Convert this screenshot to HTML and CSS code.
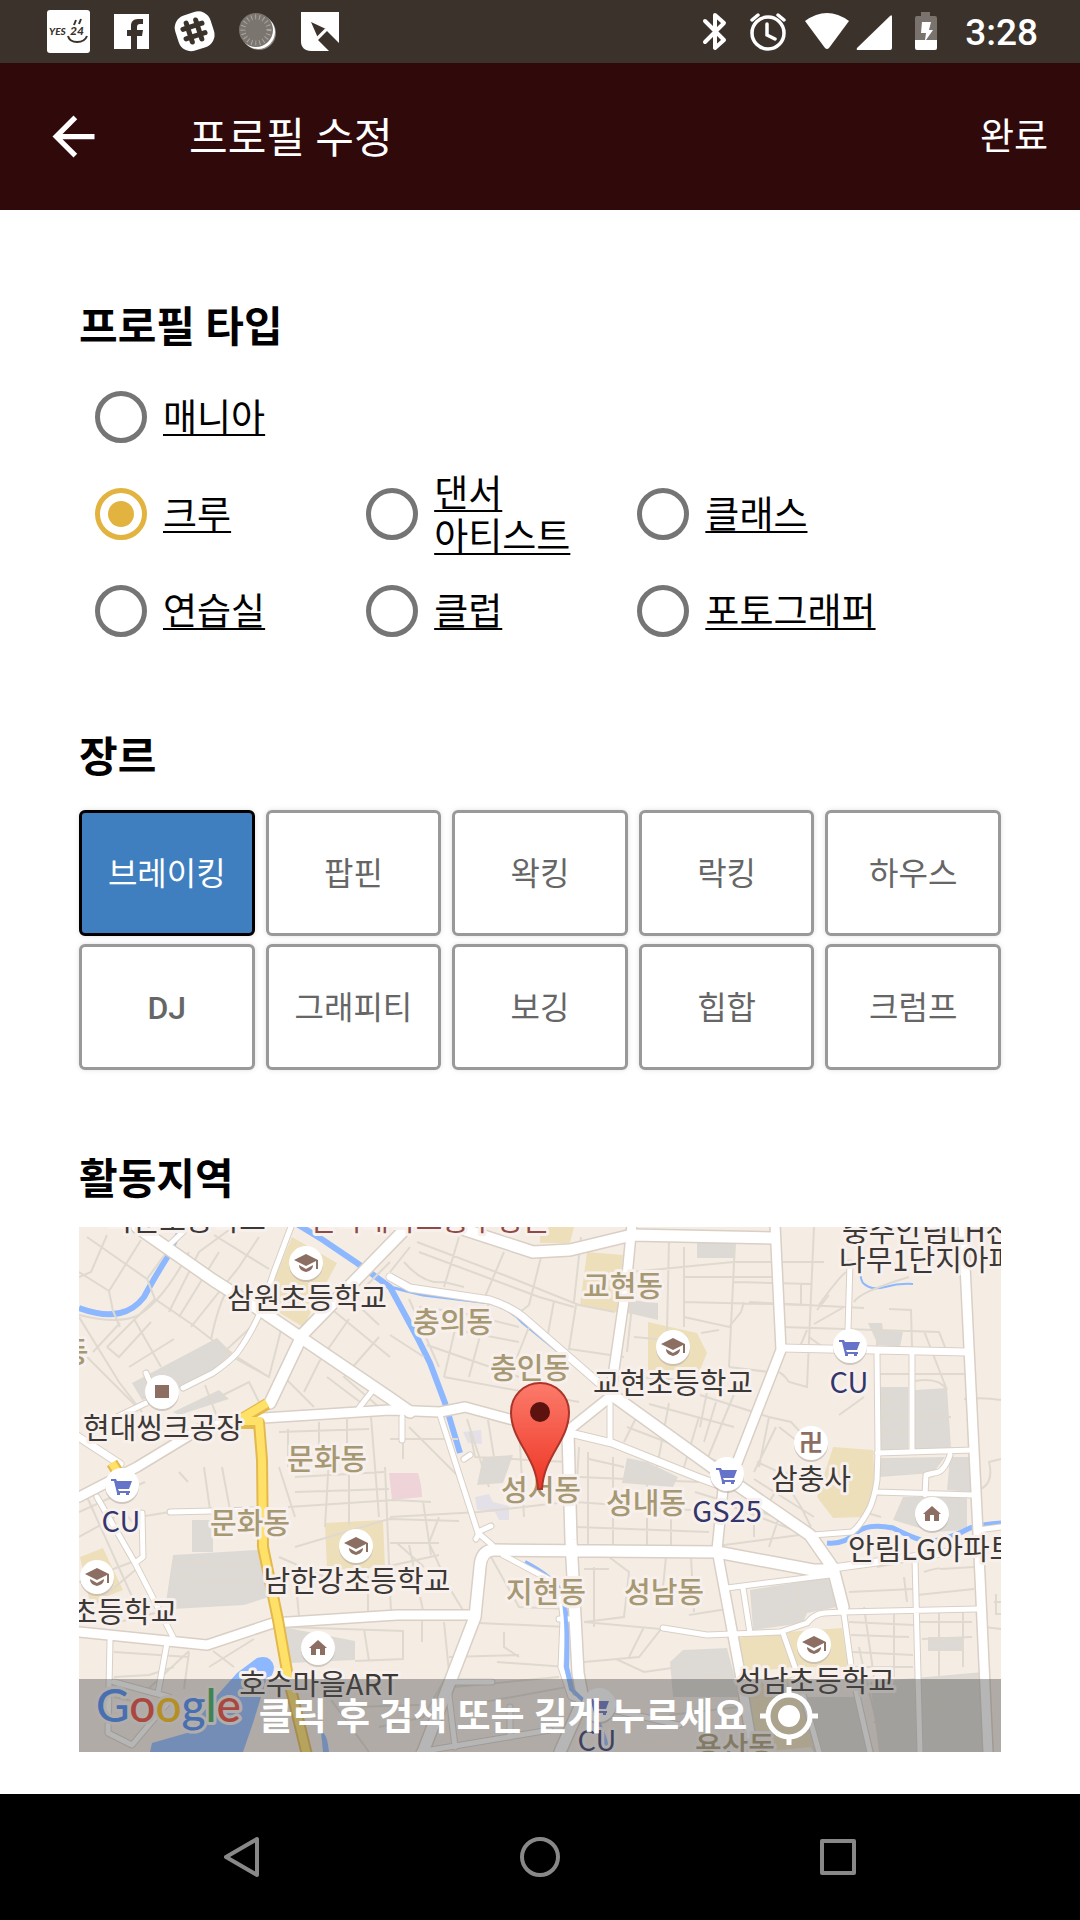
FILE: index.html
```html
<!DOCTYPE html>
<html lang="ko">
<head>
<meta charset="UTF-8">
<meta name="viewport" content="width=device-width, initial-scale=1.0">
<title>프로필 수정</title>
<link rel="stylesheet" href="styles.css">
</head>
<body>

<div class="status-bar">
<div class="notifications">
<svg viewBox="0 0 63 63"><rect x="10" y="10" width="43" height="43" rx="3" fill="#fff"/><g fill="#3b322c" font-family="Lato, sans-serif" font-weight="900" font-style="italic"><text x="12" y="35" font-size="10">YES</text><text x="33" y="35" font-size="12">24</text></g><path d="M39 20l-2 5M44 19l-2 5M31 36c2 8 16 8 19 0" fill="none" stroke="#3b322c" stroke-width="2"/></svg>
<svg viewBox="0 0 63 63"><path d="M14 14h35v35H37V36h5l1-6h-6v-3c0-2 1-3 3-3h3v-5h-5c-5 0-7 3-7 7v4h-4v6h4v13H14z" fill="#fff"/></svg>
<svg viewBox="0 0 63 63"><rect x="13" y="13" width="37" height="37" rx="13" fill="#fff" transform="rotate(-18 31 31)"/><g transform="rotate(-18 31 31)" stroke="#3b322c" stroke-width="5" stroke-linecap="round"><path d="M26 21v20M36 21v20M21 26h20M21 36h20"/></g></svg>
<svg viewBox="0 0 63 63"><circle cx="33" cy="33" r="17" fill="#8b8681"/><circle cx="32" cy="32" r="17" fill="#fff"/><circle cx="30" cy="30" r="17" fill="#7a756f"/><circle cx="30" cy="30" r="13" fill="none" stroke="#a9a5a0" stroke-width="5" stroke-dasharray="1 3"/></svg>
<svg viewBox="0 0 63 63"><path d="M12 12h38v31L38 31l-4 4-5 5 11 11H22c-6 0-10-4-10-9z" fill="#fff"/><path d="M22 22l15 7-8 9z" fill="#3b322c"/><path d="M37 29l-9 9" stroke="#fff" stroke-width="2"/></svg>
</div>
<div class="indicators">
<svg class="system-icons" viewBox="0 0 240 63">
<path d="M4 21l19 19-9 8V15l9 8L4 42" fill="none" stroke="#fff" stroke-width="4" stroke-linejoin="round" stroke-linecap="round"/>
<circle cx="67" cy="33" r="16" fill="none" stroke="#fff" stroke-width="3.5"/>
<path d="M66 24v11l8 4M51 20l6-5M83 20l-6-5" fill="none" stroke="#fff" stroke-width="3.5" stroke-linecap="round"/>
<path d="M104 21q22-16 44 0l-20 27q-2 2-4 0z" fill="#fff"/>
<path d="M156 48l33-32q2-2 2 1v31q0 2-2 2h-32q-2 0-1-2z" fill="#fff"/>
<path d="M220 12h9v4h5q2 0 2 2v22h-22V18q0-2 2-2h4z" fill="#7a736d"/>
<path d="M214 40h22v8q0 2-2 2h-18q-2 0-2-2z" fill="#fff"/>
<path d="M221 22h9l-2 8h4l-7 10h-1l1-7h-5z" fill="#fff"/>
</svg>
<span class="clock">3:28</span>
</div>
</div>

<header class="app-bar">
<button class="back" type="button" aria-label="뒤로"><svg viewBox="0 0 24 24"><path d="M20 11H7.830l5.590-5.590L12 4l-8 8 8 8 1.410-1.410L7.830 13H20z" fill="#fff"/></svg></button>
<h1>프로필 수정</h1>
<button class="done" type="button">완료</button>
</header>

<main class="content">
<section class="section">
<h2>프로필 타입</h2>
<div class="types">
<label class="type wide"><input type="radio" name="type"><span>매니아</span></label>
<label class="type"><input type="radio" name="type" checked><span>크루</span></label>
<label class="type"><input type="radio" name="type"><span>댄서<br>아티스트</span></label>
<label class="type"><input type="radio" name="type"><span>클래스</span></label>
<label class="type"><input type="radio" name="type"><span>연습실</span></label>
<label class="type"><input type="radio" name="type"><span>클럽</span></label>
<label class="type"><input type="radio" name="type"><span>포토그래퍼</span></label>
</div>
</section>

<section class="section">
<h2>장르</h2>
<div class="genres">
<button class="genre active" type="button">브레이킹</button>
<button class="genre" type="button">팝핀</button>
<button class="genre" type="button">왁킹</button>
<button class="genre" type="button">락킹</button>
<button class="genre" type="button">하우스</button>
<button class="genre latin" type="button">DJ</button>
<button class="genre" type="button">그래피티</button>
<button class="genre" type="button">보깅</button>
<button class="genre" type="button">힙합</button>
<button class="genre" type="button">크럼프</button>
</div>
</section>

<section class="section">
<h2>활동지역</h2>
<div class="map">
<svg class="map-view" viewBox="0 0 922 525" preserveAspectRatio="xMidYMid slice">
<defs>
<linearGradient id="pinFill" x1="0" y1="0" x2="0" y2="1"><stop offset="0" stop-color="#fc7b6b"/><stop offset="1" stop-color="#ee3524"/></linearGradient>
<symbol id="spot" viewBox="0 0 40 40"><circle cx="20" cy="22" r="17" fill="#b8afa8" opacity=".6"/><circle cx="20" cy="20" r="17" fill="#fff"/></symbol>
<symbol id="school" viewBox="0 0 40 40"><use href="#spot"/><path d="M8 17l12-6 12 6v9h-2v-8l-10 5z" fill="#8d6e63"/><path d="M13 22l7 4 7-4c0 4-3 6-7 7-4-1-7-3-7-7z" fill="#8d6e63"/></symbol>
<symbol id="cart" viewBox="0 0 40 40"><use href="#spot"/><path d="M9 14h5l1 2h15l-3 8H16l1 2h11v2H15l-3-12H9zM15 27h3v3h-3zM24 27h3v3h-3z" fill="#6573c8"/></symbol>
<symbol id="home" viewBox="0 0 40 40"><use href="#spot"/><path d="M20 12l9 8h-2v7h-5v-6h-4v6h-5v-7h-2z" fill="#8d6e63"/></symbol>
</defs>
<rect width="922" height="525" fill="#f5ede4"/>

<!-- blocks -->
<g fill="#dddad5">
<path d="M53 156L138 111 153 126 134 145 104 160 63 173zM94 185L140 163 150 172 100 188z"/>
<path d="M94 328L179 323 190 370 165 378 94 382 87 375zM113 293h21v32h-21z"/>
<path d="M404 230L434 228 424 256 398 258zM548 231L568 235 599 250 594 260 543 256zM551 73L579 76 579 93 549 86z"/>
<path d="M789 96h14l1 7 20 2-3 15-22-2zM801 160h28v63h-28zM836 163l32-2 4 60-36 2zM801 231l65-1-12 16-53 4zM871 230h22v35l-25-2z"/>
<path d="M824 270h64v33l-34 2-40-12zM671 363l80-13 7 30-30 6-4 10-50 7zM604 423l44-2 13 49h-67l-3-35zM791 455l113-10 4 80h-108zM204 400l72 14v19l-65 3zM618 16h38v15h-38zM849 410h35v14h-35zM700 470h80l15 55h-60z"/>
</g>
<g fill="#eedfbb">
<path d="M213 10L258 36 224 100 201 86 196 50zM508 25L544 28 538 85 501 78zM569 95L618 106 628 126 621 143 569 143zM461 0h34l-4 16h-30z"/>
<path d="M754 220L794 223 796 260 784 290 754 291 738 270zM246 296L304 293 306 340 248 343zM1 330L24 321 44 363 11 376z"/>
<path d="M658 411L701 406 714 440 664 446zM708 405L763 401 769 440 718 440zM664 450h50l20 70-58 5z"/>
</g>
<path d="M310 246h29q4 12 4 24l-30 3z" fill="#eed3d8"/>
<path d="M384 205l18-2 1 14-14-1zM396 270l14-3 4 8 16 4v14h-10l-4-8-18-2z" fill="#e3e0e8"/>

<!-- water -->
<path d="M178 431q14-4 17 9 0 9-8 14l-13 42-10 29H71l2-9 35-10 26-33 24-27z" fill="#8db8ff"/>
<path d="M242 505q6 0 8 20h-6z" fill="#8db8ff"/>
<g fill="none" stroke="#8db8ff" stroke-width="6">
<path d="M0 81Q25 90 41 86 55 83 65 70 74 53 89 29 95 12 105 0"/>
<path d="M218-3L244 13 278 36 311 60 338 110 351 136 366 176 381 226"/>
<path d="M748 316Q765 318 778 305 790 296 814 301 840 314 851 315 875 310 891 301 905 297 922 296" stroke-width="5"/>
<path d="M446 335Q475 350 483 366 490 385 488 440 492 462 507 476 525 500 529 525" stroke-width="4"/>
<path d="M311 60L344 68 411 76Q432 82 444 96L518 156" stroke-width="3"/>
<path d="M782 36q-2 14 2 20 8 8 22 4 14-4 28-3" stroke-width="2"/>
</g>

<!-- side streets -->
<g class="streets">
<path d="M0 45L30 64 34 84 41 100M30 64L62 13M8 10L68 52 76 72 114 98 132 112 153 126M0 50L12 45 28 8M68 52L95 15M100 90L140 25M112 100L160 40 180 10M90 85L120 25 150 3M135 8L190 42"/>
<path d="M0 90L40 155 63 185M55 92L82 140M76 72L28 120M72 95L40 130 28 120M95 112L50 140M8 130L60 182M41 96L14 125"/>
<path d="M0 88Q40 98 60 88 85 72 110 25M132 112Q140 75 150 60M172 100L145 125 190 150 202 103M158 130L190 150M126 158L140 195M140 170L170 155 180 175M270 92L240 135 225 165M300 110L265 150 300 180M250 80L311 130M268 68L300 98M311 35L280 66M248 150L285 178M205 150L235 180"/>
<path d="M331 20L311 45M338 15L430 50 500 78 536 85M380 10L365 60M425 25L405 72M462 30L450 78 435 90M340 25L460 70 495 80M325 35Q345 58 365 55L385 60M311 108L345 130M340 80L380 85 365 150M380 85L440 100M410 75L390 150M450 100L430 150M348 118L440 150M365 150L500 175M330 72L360 140M360 100L440 115M475 74L468 112M497 78L490 122 545 130"/>
<path d="M311 212h68M324 212v20M330 200L380 250M409 193L415 230M391 205L396 230 488 235M440 200L445 290M388 192L410 260M311 290L400 285 488 275M200 205L290 202M209 202V240M240 195V235M268 192V230M292 190L300 290M216 250L305 245M216 265L310 262M200 240L216 290M250 230L246 300M270 230V298"/>
<path d="M209 280L315 273 352 275M306 240L312 385M216 320L310 292 380 294M306 340L360 328M318 316L345 340M311 316L360 316M360 290L350 316 370 360 385 385M330 318L345 388M344 274L352 328M216 345L220 390M289 340V388M200 330L246 350"/>
<path d="M0 285L66 255M125 240L131 283M100 245L109 255M143 240L151 283M0 310L45 285 66 310M8 270L60 385M0 355L66 330M12 380L60 340M60 290L91 285M40 395L80 385M93 335L172 338M93 350L172 355"/>
<path d="M35 425L110 430M35 450L70 448 95 440M66 465L110 424M35 470L80 480M110 425L105 462M134 424L155 440M130 440L175 412M205 400L324 404V432L276 434M285 402L290 434M343 392V415M365 395L370 445 344 490M370 430L440 428M425 405V420L440 430M375 460L480 450M250 470L290 525M276 480L340 478M300 500L345 490"/>
<path d="M400 396L488 400M412 330L440 380 488 382M418 435L488 440M405 475L488 460M505 342H530M515 340V400M530 330L550 345 545 390 505 395M587 330L583 370M612 330L615 385M550 365L585 367M505 395L582 402 560 430 505 435M537 432L565 445 600 440M565 400L550 430M610 388L648 382"/>
<path d="M500 220L494 320M509 225V320M534 230V318M568 250V320M592 260V320M496 275L640 285M498 300L630 305M500 250L620 255M510 232L545 240M548 200L640 235M590 176L578 240M560 185L545 215M620 190L605 240M570 177L655 200M616 265L730 300M630 320L735 306"/>
<path d="M502 10L495 75M590 12L588 105M605 20V100M552 45L654 35 745 35M605 50L696 50M656 16L650 140M605 75L730 78M655 55L732 57M735 0L728 160 710 155Q700 140 690 145L650 140M722 57V78M605 90L650 100 662 85 665 75M640 103L622 106M740 78Q760 50 767 45"/>
<path d="M555 60L548 125M555 110L610 115M555 150L640 155M670 75L785 81M703 100L860 105 866 120M738 83L750 68M728 103L720 122M730 110L748 123M735 97L765 80M775 75Q780 65 830 50M810 82L832 83 833 120M845 104L868 163M798 105V120M836 154Q860 150 868 163M801 147L886 147M836 190H872M801 175H829M801 190H829M801 205H829M785 170L760 188"/>
<path d="M621 168L690 190 712 195 735 220M630 155L621 200M660 155L625 240M637 175L625 215M697 200L675 245M690 190L680 240M700 200L732 225M678 235L700 245 722 280 732 300M675 252L735 290M712 240L690 275M885 172Q905 170 922 173M922 232L910 235Q915 255 902 262M785 285L802 290"/>
<path d="M654 280L680 290 720 305M675 270V310M700 290L690 320M798 340L836 333M770 365L834 362M845 345Q860 340 862 342M825 350L828 375M838 368L895 362M862 342L895 340M720 355L722 390M701 398Q700 380 722 378M770 395L835 398M772 408L830 410M838 395L893 395M843 412L893 410M785 380L795 450M815 385V450M860 380V525M884 385V440M773 425L834 428M775 440H834M838 455L904 452M842 480L906 478M795 495L842 490M915 375h8v12h-6v-20M905 400L922 402M780 420Q785 445 805 525M615 450L650 452M605 460H655M660 480L590 488"/>
</g>

<!-- roads: casing first, then the white fill -->
<g class="road-edge">
<path class="w6" d="M67 146L72 158M104 161L134 146Q150 135 158 126 170 110 181 86L195 45 213-3M67 176L11 203M88 20L104 5"/>
<path class="w6" d="M18 270L56 336 94 410M91 285L178 283M63 286L64 330 56 336M31 413L29 506 53 518 91 473M88 416L79 466M35 455L90 470M280 181L294 163"/>
<path class="w6" d="M531 176V213M361 188L399 306 413 318M385 232L391 228M400 306L397 312M401 304L412 299M424 328L471 353Q483 366 484 392L482 440 492 470 521 480M480 392H497M323 190V213"/>
<path class="w6" d="M771 36L769 103M798 126L799 223 798 253Q795 275 788 286 780 300 773 305L734 308M833 126V223M798 226L894 223M798 265L894 268M871 228Q865 246 855 246L847 248 846 268"/>
<path class="w6" d="M648 361L751 348M664 361L671 406M836 333L841 525M704 406L718 446 740 525M584 401L628 408 701 405 728 396Q735 387 745 386L764 385 898 382M764 380L773 446 791 525M370 455H413M369 460L376 520M431 480V510M340 525L471 503M521 480L600 498M899 303L922 300"/>
<path class="w8" d="M703 121L888 125M491 206L533 216 618 250 640 258M311 50L331 61 411 73Q432 80 444 90L536 170M-5 207L41 237M754 341L834 330 905 320"/>
<path class="w10" d="M696-3L702 123 658 236 644 262 638 323 661 446 674 525M0 270L58 240 124 200 184 191 311 183 361 185 386 180 434 193 491 202 531 170 547 60 553-3M0 405L128 418 194 396 318 388 396 388M884-3L899 306 909 525"/>
<path class="w12" d="M58 0L134 53 181 83 221 110 311 171 331 185M221 110L331-3M221 113L191 176M368-3L454 25 491 23 553 8 694 11M536 170L654 255 731 308 754 341 764 380M489 206L492 313 499 446 504 473 481 525M344 525L396 390 401 340Q402 323 415 323L638 325 734 343H754"/>
</g>
<g class="road-fill">
<path class="w6" d="M67 146L72 158M104 161L134 146Q150 135 158 126 170 110 181 86L195 45 213-3M67 176L11 203M88 20L104 5"/>
<path class="w6" d="M18 270L56 336 94 410M91 285L178 283M63 286L64 330 56 336M31 413L29 506 53 518 91 473M88 416L79 466M35 455L90 470M280 181L294 163"/>
<path class="w6" d="M531 176V213M361 188L399 306 413 318M385 232L391 228M400 306L397 312M401 304L412 299M424 328L471 353Q483 366 484 392L482 440 492 470 521 480M480 392H497M323 190V213"/>
<path class="w6" d="M771 36L769 103M798 126L799 223 798 253Q795 275 788 286 780 300 773 305L734 308M833 126V223M798 226L894 223M798 265L894 268M871 228Q865 246 855 246L847 248 846 268"/>
<path class="w6" d="M648 361L751 348M664 361L671 406M836 333L841 525M704 406L718 446 740 525M584 401L628 408 701 405 728 396Q735 387 745 386L764 385 898 382M764 380L773 446 791 525M370 455H413M369 460L376 520M431 480V510M340 525L471 503M521 480L600 498M899 303L922 300"/>
<path class="w8" d="M703 121L888 125M491 206L533 216 618 250 640 258M311 50L331 61 411 73Q432 80 444 90L536 170M-5 207L41 237M754 341L834 330 905 320"/>
<path class="w10" d="M696-3L702 123 658 236 644 262 638 323 661 446 674 525M0 270L58 240 124 200 184 191 311 183 361 185 386 180 434 193 491 202 531 170 547 60 553-3M0 405L128 418 194 396 318 388 396 388M884-3L899 306 909 525"/>
<path class="w12" d="M58 0L134 53 181 83 221 110 311 171 331 185M221 110L331-3M221 113L191 176M368-3L454 25 491 23 553 8 694 11M536 170L654 255 731 308 754 341 764 380M489 206L492 313 499 446 504 473 481 525M344 525L396 390 401 340Q402 323 415 323L638 325 734 343H754"/>
</g>
<path d="M484 370Q489 395 487 440L492 462 507 476 521 490" fill="none" stroke="#8db8ff" stroke-width="4"/>
<g fill="none" stroke-linejoin="round">
<path d="M163 192L188 177M160 196H180L183 233 184 320 199 393 209 450 228 528M33 236L38 244" stroke="#e3b94e" stroke-width="12"/>
<path d="M163 191L188 176M162 194H180L183 233 184 320 199 393 209 450 228 528M33 236L38 244" stroke="#ffe168" stroke-width="8"/>
</g>

<!-- places -->
<use href="#school" x="207" y="16" width="40" height="40"/>
<use href="#school" x="574" y="100" width="40" height="40"/>
<use href="#school" x="257" y="299" width="40" height="40"/>
<use href="#school" x="-2" y="330" width="40" height="40"/>
<use href="#school" x="715" y="398" width="40" height="40"/>
<use href="#cart" x="23" y="238" width="40" height="40"/>
<use href="#cart" x="751" y="99" width="40" height="40"/>
<use href="#cart" x="628" y="227" width="40" height="40"/>
<use href="#cart" x="500" y="458" width="40" height="40"/>
<use href="#home" x="833" y="267" width="40" height="40"/>
<use href="#home" x="219" y="401" width="40" height="40"/>
<use href="#spot" x="63" y="145" width="40" height="40"/>
<rect x="76" y="158" width="14" height="13" fill="#8d6e63"/>
<use href="#spot" x="712" y="196" width="40" height="40"/>
<text class="temple" x="732" y="224">卍</text>

<g class="district">
<text x="374" y="106">충의동</text>
<text x="451" y="152">충인동</text>
<text x="544" y="70">교현동</text>
<text x="248" y="243">문화동</text>
<text x="171" y="307">문화동</text>
<text x="462" y="274">성서동</text>
<text x="567" y="287">성내동</text>
<text x="467" y="376">지현동</text>
<text x="585" y="376">성남동</text>
<text x="656" y="531">용산동</text>
<text x="-4" y="136">동</text>
</g>
<g class="place">
<text x="107" y="4">국원초등학교</text>
<text x="228" y="82">삼원초등학교</text>
<text x="84" y="212">현대씽크공장</text>
<text x="278" y="365">남한강초등학교</text>
<text x="45" y="396">초등학교</text>
<text x="240" y="468">호수마을ART</text>
<text x="594" y="167">교현초등학교</text>
<text x="732" y="263">삼충사</text>
<text x="736" y="465">성남초등학교</text>
<text class="start" x="769" y="333">안림LG아파트</text>
<text class="start" x="763" y="15">충주안림LH천년</text>
<text class="start" x="760" y="44">나무1단지아파트</text>
</g>
<g class="place hospital"><text x="350" y="4">건국대학교충주병원</text></g>
<g class="place store">
<text x="42" y="305">CU</text>
<text x="770" y="166">CU</text>
<text x="648" y="295">GS25</text>
<text x="518" y="524">CU</text>
</g>
<text class="google" x="17" y="495"><tspan fill="#4285f4">G</tspan><tspan fill="#ea4335">o</tspan><tspan fill="#fbbc05">o</tspan><tspan fill="#4285f4">g</tspan><tspan fill="#34a853">l</tspan><tspan fill="#ea4335">e</tspan></text>

<path d="M459 262C457 228 432 214 432 185a29 29 0 0 1 58 0C490 214 465 228 463 262z" fill="url(#pinFill)" stroke="#ab3529" stroke-width="2"/>
<circle cx="461" cy="185" r="10" fill="#5c130f"/>
</svg>
<button class="map-hint" type="button">
<span>클릭 후 검색 또는 길게 누르세요</span>
<svg viewBox="0 0 64 64" fill="none" stroke="#fff"><circle cx="32" cy="32" r="21" stroke-width="5"/><circle cx="32" cy="32" r="11" fill="#fff" stroke="none"/><path d="M32 3v8M32 53v8M3 32h8M53 32h8" stroke-width="5"/></svg>
</button>
</div>
</section>
</main>

<nav class="nav-bar">
<button type="button" aria-label="뒤로"><svg viewBox="0 0 48 48"><path d="M39 6v36L8 24z"/></svg></button>
<button type="button" aria-label="홈"><svg viewBox="0 0 48 48"><circle cx="24" cy="24" r="18"/></svg></button>
<button type="button" aria-label="최근 앱"><svg viewBox="0 0 48 48"><rect x="8" y="8" width="32" height="32"/></svg></button>
</nav>

</body>
</html>
```
FILE: styles.css
```css
* {
    box-sizing: border-box;
}

body {
    margin: 0;
    min-height: 100vh;
    display: flex;
    flex-direction: column;
    background-color: #fff;
    color: #000;
    font-family: Roboto, "Noto Sans CJK KR", sans-serif;
}

button {
    padding: 0;
    border: none;
    background: none;
    color: inherit;
    font-family: inherit;
    cursor: pointer;
}

svg {
    display: block;
}

.status-bar {
    display: flex;
    justify-content: space-between;
    height: 63px;
    padding: 0 42px 0 37px;
    background-color: #3b322c;
    color: #fff;
}

.notifications,
.indicators {
    display: flex;
    align-items: center;
}

.notifications svg {
    width: 63px;
    height: 63px;
}

.system-icons {
    width: 240px;
    height: 63px;
}

.clock {
    margin-left: 24px;
    padding-top: 2px;
    font-size: 37px;
    font-weight: 500;
    line-height: 43px;
}

.app-bar {
    display: flex;
    align-items: center;
    height: 147px;
    padding: 0 32px 0 42px;
    background-color: #30090b;
    color: #fff;
}

.back svg {
    width: 63px;
    height: 63px;
}

.app-bar h1 {
    flex: 1;
    margin: 0 0 0 84px;
    padding-top: 4px;
    font-size: 42px;
    font-weight: 400;
    line-height: 49px;
}

.done {
    padding-top: 2px;
    font-size: 37px;
    line-height: 43px;
}

.content {
    flex: 1;
    padding: 93px 79px 42px;
}

.section h2 {
    margin: 0;
    font-size: 42px;
    font-weight: 700;
    line-height: 49px;
}

.types {
    display: grid;
    grid-template-columns: 5fr 5fr 7fr;
    grid-auto-rows: 97px;
    margin: 16px 0 74px;
}

.type {
    display: flex;
    align-items: center;
    font-size: 37px;
    line-height: 43px;
    text-decoration: underline;
    text-decoration-thickness: 2px;
    text-underline-offset: 3px;
    text-decoration-skip-ink: none;
    white-space: nowrap;
}

.type.wide {
    grid-column: 1 / -1;
}

.type input {
    appearance: none;
    flex: none;
    width: 52px;
    height: 52px;
    margin: 0 16px;
    padding: 8px;
    border: 5px solid #757575;
    border-radius: 50%;
}

.type input:checked {
    border-color: #e2b33f;
    background-color: #e2b33f;
    background-clip: content-box;
}

.type span {
    padding-top: 4px;
}

.genres {
    display: grid;
    grid-template-columns: repeat(5, 1fr);
    gap: 8px 11px;
    margin: 28px 0 85px;
}

.genre {
    height: 126px;
    padding-top: 2px;
    border: 3px solid #999;
    border-radius: 6px;
    background-color: #fff;
    box-shadow: 0 0 5px rgba(0, 0, 0, 0.12);
    color: #666;
    font-size: 32px;
    line-height: 37px;
}

.genre.latin {
    font-weight: 500;
}

.genre.active {
    border-color: #000;
    background-color: #3f7fc0;
    color: #fff;
}

.map {
    position: relative;
    height: 525px;
    margin-top: 23px;
    overflow: hidden;
}

.map-view {
    width: 100%;
    height: 100%;
}

.map-view text {
    font-family: "Noto Sans CJK KR", sans-serif;
    text-anchor: middle;
    paint-order: stroke;
    stroke: #f7f0ec;
    stroke-width: 6px;
    stroke-linejoin: round;
}

.map-view .start {
    text-anchor: start;
}

.streets {
    fill: none;
    stroke: #dfd9cf;
    stroke-width: 2px;
}

.road-edge,
.road-fill {
    fill: none;
    stroke-linejoin: round;
    stroke-linecap: round;
}

.road-edge {
    stroke: #d9cfc5;
}

.road-fill {
    stroke: #fff;
}

.road-edge .w6 { stroke-width: 7px; }
.road-edge .w8 { stroke-width: 9px; }
.road-edge .w10 { stroke-width: 12px; }
.road-edge .w12 { stroke-width: 14px; }
.road-fill .w6 { stroke-width: 5px; }
.road-fill .w8 { stroke-width: 7px; }
.road-fill .w10 { stroke-width: 9px; }
.road-fill .w12 { stroke-width: 11px; }

.district {
    fill: #a69872;
    font-size: 29px;
    font-weight: 500;
}

.place {
    fill: #3c3835;
    font-size: 29px;
}

.hospital {
    fill: #8f4a45;
}

.store {
    fill: #33366b;
}

.map-view .temple {
    fill: #8d6e63;
    font-size: 24px;
    font-weight: 700;
    stroke: none;
}

.map-view .google {
    font-family: Lato, sans-serif;
    font-size: 46px;
    font-weight: 500;
    text-anchor: start;
}

.map-hint {
    position: absolute;
    right: 0;
    bottom: 0;
    left: 0;
    display: flex;
    justify-content: center;
    align-items: center;
    gap: 10px;
    height: 73px;
    background-color: rgba(80, 80, 80, 0.42);
    color: #fff;
    font-size: 37px;
    font-weight: 700;
    line-height: 43px;
}

.map-hint span {
    padding-top: 4px;
}

.map-hint svg {
    width: 64px;
    height: 64px;
}

.nav-bar {
    display: flex;
    justify-content: center;
    align-items: center;
    gap: 250px;
    height: 126px;
    background-color: #000;
}

.nav-bar svg {
    width: 48px;
    height: 48px;
    fill: none;
    stroke: #888;
    stroke-width: 4px;
    stroke-linejoin: round;
}
```
